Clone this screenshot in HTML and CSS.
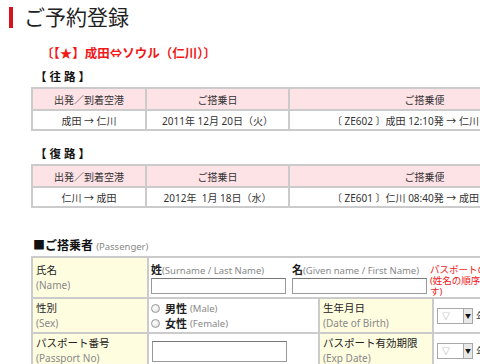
FILE: index.html
```html
<!DOCTYPE html>
<html lang="ja">
<head>
	<meta charset="utf-8">
	<title>ご予約登録</title>
	<link rel="stylesheet" href="styles.css">
</head>
<body>
<div class="page">
	<h1 class="title">ご予約登録</h1>
	<p class="route">〔【★】成田⇔ソウル（仁川）〕</p>

	<h2 class="leg">【 往 路 】</h2>
	<table class="flight">
		<tr>
			<th class="c1">出発／到着空港</th>
			<th class="c2">ご搭乗日</th>
			<th>ご搭乗便</th>
		</tr>
		<tr>
			<td>成田 → 仁川</td>
			<td>2011年 12月 20日（火）</td>
			<td>〔 ZE602 〕成田 12:10発 → 仁川 14:40着</td>
		</tr>
	</table>

	<h2 class="leg">【 復 路 】</h2>
	<table class="flight">
		<tr>
			<th class="c1">出発／到着空港</th>
			<th class="c2">ご搭乗日</th>
			<th>ご搭乗便</th>
		</tr>
		<tr>
			<td>仁川 → 成田</td>
			<td>2012年&nbsp;&nbsp;1月 18日（水）</td>
			<td>〔 ZE601 〕仁川 08:40発 → 成田 10:55着</td>
		</tr>
	</table>

	<h2 class="sec">■ご搭乗者 <span>(Passenger)</span></h2>
	<table class="form">
		<colgroup>
			<col class="w1">
			<col class="w2">
			<col class="w3">
			<col class="w4">
		</colgroup>
		<tr class="row-name">
			<th>氏名<br><span>(Name)</span></th>
			<td colspan="3">
				<div class="names">
					<label class="field">
						<span class="cap">姓<span>(Surname / Last Name)</span></span>
						<input type="text" class="txt">
					</label>
					<label class="field">
						<span class="cap">名<span>(Given name / First Name)</span></span>
						<input type="text" class="txt">
					</label>
					<p class="note">パスポートの記載通りにご入力下さい<br>(姓名の順序違いにご注意下さい。ご搭乗できない場合がございま<br>す)</p>
				</div>
			</td>
		</tr>
		<tr class="row-sm">
			<th>性別<br><span>(Sex)</span></th>
			<td>
				<label class="radio"><input type="radio" name="sex"> <b>男性</b> <span>(Male)</span></label>
				<label class="radio"><input type="radio" name="sex"> <b>女性</b> <span>(Female)</span></label>
			</td>
			<th>生年月日<br><span>(Date of Birth)</span></th>
			<td>
				<div class="dates">
					<span class="sel"><span class="ph">▽</span><span class="btn">▼</span></span>
					<span class="unit">年</span>
				</div>
			</td>
		</tr>
		<tr class="row-sm">
			<th>パスポート番号<br><span>(Passport No)</span></th>
			<td><input type="text" class="txt pass"></td>
			<th>パスポート有効期限<br><span>(Exp Date)</span></th>
			<td>
				<div class="dates">
					<span class="sel"><span class="ph">▽</span><span class="btn">▼</span></span>
					<span class="unit">年</span>
				</div>
			</td>
		</tr>
	</table>
</div>
</body>
</html>
```

FILE: styles.css
```css
html, body {
	margin: 0;
	padding: 0;
	overflow: hidden;
	background: #fff;
}

body {
	font-family: "Noto Sans", "Noto Sans CJK JP", sans-serif;
	color: #333;
	font-size: 10px;
}

.page {
	padding-top: 7px;
	width: 640px;
}

.title {
	margin: 0 0 0 9px;
	padding-left: 11px;
	border-left: 4px solid #d7141e;
	font-size: 21px;
	line-height: 21px;
	font-weight: normal;
	color: #222;
}

.route {
	margin: 18px 0 0 41px;
	line-height: 16px;
	font-size: 12.5px;
	font-weight: bold;
	color: #f01818;
}

.leg {
	margin: 8px 0 3px 35px;
	font-size: 11.5px;
	line-height: 14px;
	color: #111;
}

.leg + table + .leg {
	margin-top: 16px;
}

table {
	border-collapse: collapse;
	margin-left: 31px;
}

.flight {
	width: 530px;
}

.flight th,
.flight td {
	border: 2px solid #cbcbcb;
	text-align: center;
	font-weight: normal;
	padding: 0;
	color: #333;
	white-space: nowrap;
}

.flight th {
	background: #fde2e6;
	height: 20px;
}

.flight td {
	height: 18px;
}

.flight .c1 {
	width: 112px;
}

.flight .c2 {
	width: 141px;
}

.sec {
	margin: 30px 0 1px 33px;
	font-size: 12px;
	line-height: 16px;
	color: #111;
}

.sec span {
	font-size: 9.5px;
	font-weight: normal;
	color: #888;
}

.form {
	table-layout: fixed;
	width: 560px;
}

.w1 {
	width: 116px;
}

.w2 {
	width: 171px;
}

.w3 {
	width: 114px;
}

.form th,
.form td {
	border: 2px solid #cbcbcb;
	padding: 0;
	text-align: left;
	vertical-align: middle;
	overflow: visible;
}

.form th {
	background: #fffde0;
	font-weight: normal;
	color: #222;
	line-height: 15px;
	padding-left: 3px;
	font-size: 10.5px;
	white-space: nowrap;
}

.form th span {
	color: #888;
	font-size: 10px;
}

.row-name {
	height: 41px;
}

.row-sm {
	height: 35px;
}

.names {
	display: flex;
	align-items: flex-start;
	padding: 4px 0 0 2px;
	gap: 6px;
}

.field {
	display: flex;
	flex-direction: column;
	flex: none;
	width: 135px;
	white-space: nowrap;
}

.cap {
	font-size: 11px;
	line-height: 13px;
	color: #222;
	font-weight: bold;
}

.cap span {
	font-size: 9.5px;
	font-weight: normal;
	color: #888;
}

.txt {
	box-sizing: border-box;
	width: 135px;
	height: 16px;
	margin: 1px 0 0;
	border: 1px solid #999;
	border-top-color: #777;
	background: #fff;
	padding: 0;
}

.pass {
	display: block;
	height: 21px;
	margin-left: 3px;
}

.note {
	margin: 1px 0 0 -3px;
	color: #f02020;
	font-size: 9.5px;
	line-height: 11px;
	white-space: nowrap;
}

.radio {
	display: flex;
	align-items: center;
	gap: 3px;
	padding-left: 2px;
	line-height: 15px;
	font-size: 11px;
	color: #222;
	white-space: nowrap;
}

.radio b {
	margin-left: 2px;
}

.radio span {
	font-size: 9.5px;
	color: #888;
}

.radio input {
	appearance: none;
	margin: 0;
	width: 9px;
	height: 9px;
	border: 1px solid #9a9a9a;
	border-radius: 50%;
	background: radial-gradient(circle at 40% 40%, #fff, #d8d8d8);
}

.dates {
	display: flex;
	align-items: center;
	padding-left: 3px;
}

.sel {
	box-sizing: border-box;
	display: flex;
	justify-content: space-between;
	align-items: center;
	width: 36px;
	height: 16px;
	border: 1px solid #a8a8a8;
	background: #fff;
}

.ph {
	font-size: 8px;
	color: #999;
	padding-left: 4px;
}

.btn {
	box-sizing: border-box;
	width: 9px;
	height: 14px;
	border-left: 1px solid #a8a8a8;
	background: #e8e8e8;
	font-size: 6px;
	line-height: 14px;
	text-align: center;
	color: #111;
}

.unit {
	margin-left: 3px;
	font-size: 11px;
	color: #444;
}
```
